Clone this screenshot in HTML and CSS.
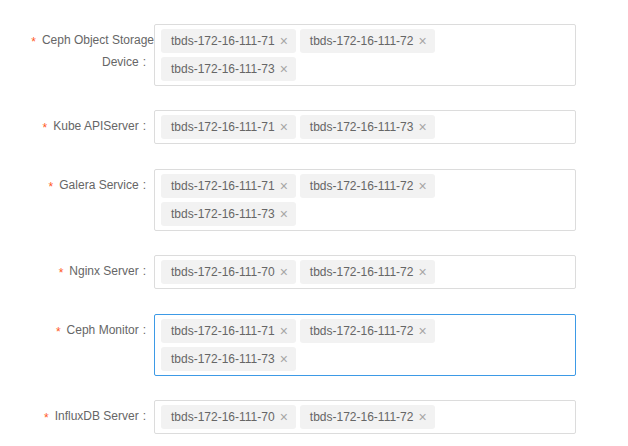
FILE: index.html
```html
<!DOCTYPE html>
<html>
<head>
<meta charset="utf-8">
<link rel="stylesheet" href="styles.css">
</head>
<body>
<div class="form">
  <div class="item">
    <div class="label"><span class="req">*</span>Ceph Object Storage Device</div>
    <div class="field">
      <span class="tag">tbds-172-16-111-71<span class="close">×</span></span>
      <span class="tag">tbds-172-16-111-72<span class="close">×</span></span>
      <span class="tag">tbds-172-16-111-73<span class="close">×</span></span>
    </div>
  </div>
  <div class="item">
    <div class="label"><span class="req">*</span>Kube APIServer</div>
    <div class="field">
      <span class="tag">tbds-172-16-111-71<span class="close">×</span></span>
      <span class="tag">tbds-172-16-111-73<span class="close">×</span></span>
    </div>
  </div>
  <div class="item">
    <div class="label"><span class="req">*</span>Galera Service</div>
    <div class="field">
      <span class="tag">tbds-172-16-111-71<span class="close">×</span></span>
      <span class="tag">tbds-172-16-111-72<span class="close">×</span></span>
      <span class="tag">tbds-172-16-111-73<span class="close">×</span></span>
    </div>
  </div>
  <div class="item">
    <div class="label"><span class="req">*</span>Nginx Server</div>
    <div class="field">
      <span class="tag">tbds-172-16-111-70<span class="close">×</span></span>
      <span class="tag">tbds-172-16-111-72<span class="close">×</span></span>
    </div>
  </div>
  <div class="item">
    <div class="label"><span class="req">*</span>Ceph Monitor</div>
    <div class="field focused">
      <span class="tag">tbds-172-16-111-71<span class="close">×</span></span>
      <span class="tag">tbds-172-16-111-72<span class="close">×</span></span>
      <span class="tag">tbds-172-16-111-73<span class="close">×</span></span>
    </div>
  </div>
  <div class="item">
    <div class="label"><span class="req">*</span>InfluxDB Server</div>
    <div class="field">
      <span class="tag">tbds-172-16-111-70<span class="close">×</span></span>
      <span class="tag">tbds-172-16-111-72<span class="close">×</span></span>
    </div>
  </div>
</div>
</body>
</html>
```
FILE: styles.css
```css
html, body {
  margin: 0;
  padding: 0;
  background: #fff;
}
body {
  font-family: "Liberation Sans", Arial, sans-serif;
  font-size: 12px;
  color: #666;
}
.form {
  padding: 24px 0 0 8px;
}
.item {
  display: flex;
  align-items: flex-start;
  margin-bottom: 24.4px;
}
.label {
  width: 146px;
  flex: none;
  text-align: right;
  padding-top: 6px;
  line-height: 20px;
  color: #666;
  box-sizing: border-box;
}
.label::after {
  content: ":";
  margin: 0 8px 0 4px;
}
.req {
  color: #ff5a1f;
  margin-right: 6px;
  vertical-align: -2px;
}
.field {
  width: 422px;
  box-sizing: border-box;
  border: 1px solid #dcdcdc;
  border-radius: 2px;
  padding: 4px 6px;
  display: flex;
  flex-wrap: wrap;
  gap: 4px;
  background: #fff;
}
.field.focused {
  border-color: #3d9ae6;
}
.tag {
  display: inline-flex;
  align-items: center;
  height: 24px;
  line-height: 24px;
  padding: 0 8px 0 10px;
  background: #f2f2f2;
  border-radius: 3px;
  color: #666;
  white-space: nowrap;
}
.close {
  margin-left: 5px;
  color: #a6a6a6;
  font-size: 14px;
}
```
